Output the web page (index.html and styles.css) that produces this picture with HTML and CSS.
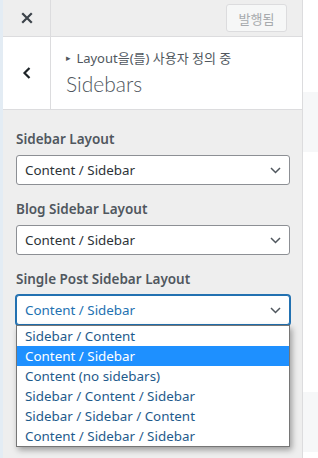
FILE: index.html
```html
<!DOCTYPE html>
<html lang="ko">
<head>
    <meta charset="UTF-8">
    <meta name="viewport" content="width=device-width, initial-scale=1.0">
    <title>Customizer</title>
    <link rel="stylesheet" href="styles.css">
</head>
<body>

<div class="edge"></div>

<div class="panel">
    <div class="topbar">
        <button class="close-btn" type="button" aria-label="닫기">
            <svg width="12" height="12" viewBox="0 0 12 12"><path d="M2 2 L10 10 M10 2 L2 10" stroke="#3c434a" stroke-width="2.2" stroke-linecap="square"/></svg>
        </button>
        <button class="publish-btn" type="button" disabled>발행됨</button>
    </div>

    <div class="section-head">
        <button class="back-btn" type="button" aria-label="뒤로">
            <svg width="10" height="14" viewBox="0 0 10 14"><path d="M7.5 2 L2.5 7 L7.5 12" fill="none" stroke="#1d2327" stroke-width="2.2"/></svg>
        </button>
        <div class="section-title">
            <span class="crumb"><span class="arrow">&#9656;</span> Layout을(를) 사용자 정의 중</span>
            <h2>Sidebars</h2>
        </div>
    </div>

    <div class="controls">
        <div class="control">
            <label>Sidebar Layout</label>
            <div class="select">Content / Sidebar
                <svg class="chev" width="11" height="7" viewBox="0 0 11 7"><path d="M1 1 L5.5 5.5 L10 1" fill="none" stroke="#50575e" stroke-width="1.5"/></svg>
            </div>
        </div>

        <div class="control">
            <label>Blog Sidebar Layout</label>
            <div class="select">Content / Sidebar
                <svg class="chev" width="11" height="7" viewBox="0 0 11 7"><path d="M1 1 L5.5 5.5 L10 1" fill="none" stroke="#50575e" stroke-width="1.5"/></svg>
            </div>
        </div>

        <div class="control open">
            <label>Single Post Sidebar Layout</label>
            <div class="select focused">Content / Sidebar
                <svg class="chev" width="11" height="7" viewBox="0 0 11 7"><path d="M1 1 L5.5 5.5 L10 1" fill="none" stroke="#50575e" stroke-width="1.5"/></svg>
            </div>
            <ul class="options">
                <li>Sidebar / Content</li>
                <li class="active">Content / Sidebar</li>
                <li>Content (no sidebars)</li>
                <li>Sidebar / Content / Sidebar</li>
                <li>Sidebar / Sidebar / Content</li>
                <li>Content / Sidebar / Sidebar</li>
            </ul>
        </div>
    </div>
</div>

<div class="preview">
    <div class="ghost ghost-top"></div>
    <div class="ghost ghost-bottom"></div>
</div>

</body>
</html>
```

FILE: styles.css
```css
body {
    margin: 0;
    padding: 0;
    display: flex;
    height: 458px;
    overflow: hidden;
    font-family: "Noto Sans", "Noto Sans CJK KR", sans-serif;
    background-color: #fff;
}

.edge {
    width: 3px;
    background-color: #e3ecf4;
}

.panel {
    width: 299px;
    background-color: #eeeeee;
    border-right: 1px solid #dcdcde;
    position: relative;
}

.topbar {
    height: 36px;
    display: flex;
    align-items: center;
    justify-content: space-between;
    border-bottom: 1px solid #dcdcde;
}

.close-btn,
.back-btn {
    background: none;
    border: none;
    border-right: 1px solid #dcdcde;
    width: 48px;
    height: 100%;
    display: flex;
    align-items: center;
    justify-content: center;
    padding: 0;
}

.publish-btn {
    margin-right: 15px;
    height: 28px;
    width: 61px;
    border: 1px solid #dcdcde;
    border-radius: 3px;
    background-color: #f6f7f7;
    color: #a7aaad;
    font-family: "Noto Sans CJK KR", sans-serif;
    font-size: 13px;
    padding: 0;
}

.section-head {
    height: 72px;
    display: flex;
    background-color: #fff;
    border-bottom: 1px solid #dcdcde;
}

.section-title {
    padding: 11px 0 0 15px;
    color: #50575e;
}

.crumb {
    display: block;
    font-size: 13px;
    line-height: 20px;
    color: #50575e;
}

.arrow {
    font-size: 9px;
    vertical-align: 2px;
    margin-right: 2px;
}

.section-title h2 {
    margin: 3px 0 0;
    font-family: Lato, "Noto Sans", sans-serif;
    font-size: 21px;
    font-weight: 300;
    line-height: 26px;
    color: #50575e;
}

.controls {
    padding: 19px 12px 0 13px;
}

.control {
    margin-bottom: 14px;
    position: relative;
}

.control label {
    display: block;
    font-size: 13.5px;
    font-weight: 600;
    color: #50575e;
    line-height: 20px;
    margin-bottom: 6px;
}

.select {
    height: 28px;
    border: 1px solid #8c8f94;
    border-radius: 3px;
    background-color: #fff;
    font-size: 13.4px;
    line-height: 28px;
    color: #2c3338;
    padding-left: 8px;
    position: relative;
}

.select.focused {
    border-color: #2271b1;
    box-shadow: 0 0 0 1px #2271b1;
    color: #2271b1;
}

.chev {
    position: absolute;
    right: 8px;
    top: 11px;
}

.options {
    position: absolute;
    left: 0;
    right: 0;
    top: 56px;
    margin: 0;
    padding: 0;
    list-style: none;
    background-color: #fff;
    border: 1px solid #767676;
    box-shadow: 2px 3px 6px rgba(0, 0, 0, 0.35);
    font-size: 13.4px;
}

.options li {
    height: 20px;
    line-height: 20px;
    padding-left: 8px;
    color: #1f5b8c;
}

.options li.active {
    background-color: #1e90ff;
    color: #fff;
}

.preview {
    flex: 1;
    display: flex;
    flex-direction: column;
}

.ghost {
    background-color: #f6f7f8;
}

.ghost-top {
    margin-top: 92px;
    height: 60px;
}

.ghost-bottom {
    margin-top: 240px;
    height: 60px;
}
```
